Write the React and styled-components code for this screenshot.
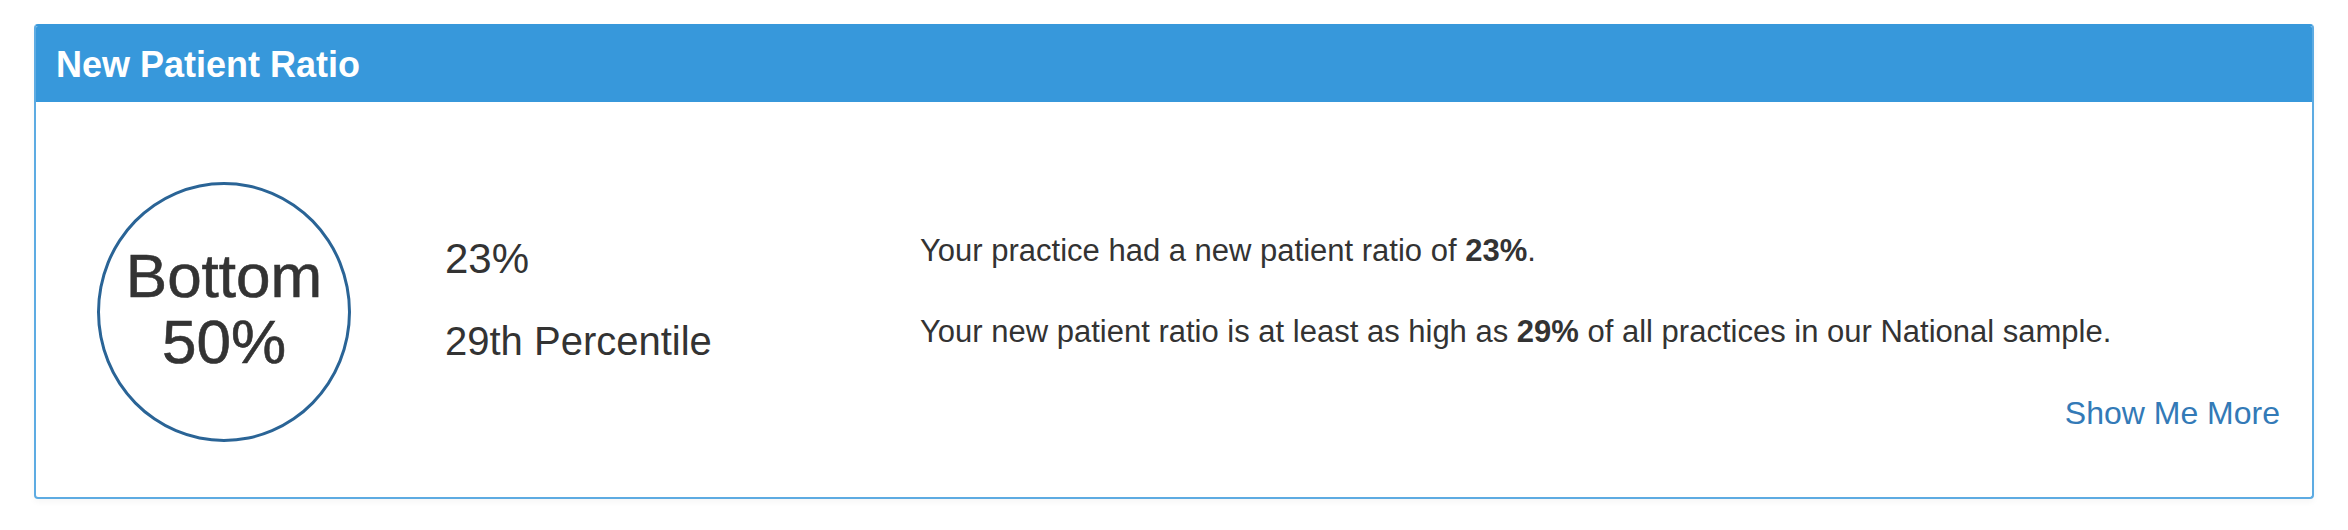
import React from 'react';
import styled, { createGlobalStyle } from 'styled-components';

const GlobalStyle = createGlobalStyle`
  html, body {
    margin: 0;
    padding: 0;
    background: #ffffff;
  }
  body {
    font-family: "Liberation Sans", Arial, Helvetica, sans-serif;
    color: #333333;
  }
`;

const Page = styled.div`
  padding: 24px 34px 31px 34px;
`;

const Panel = styled.section`
  border: 2px solid #5dabe2;
  border-top-color: #3798db;
  border-radius: 4px;
  background: #ffffff;
  box-shadow: 0 3px 6px rgba(0, 0, 0, 0.04);
  overflow: hidden;
`;

const PanelHeading = styled.header`
  background: #3798db;
  height: 76px;
  display: flex;
  align-items: center;
  padding: 0 20px;
`;

const PanelTitle = styled.h3`
  margin: 0;
  font-size: 36px;
  font-weight: 700;
  color: #ffffff;
  padding-top: 2px;
`;

const PanelBody = styled.div`
  display: flex;
  align-items: flex-start;
  padding: 80px 32px 55px 61px;
`;

const Ring = styled.div`
  flex: none;
  width: 248px;
  height: 248px;
  border: 3px solid #2a6496;
  border-radius: 50%;
  display: flex;
  flex-direction: column;
  align-items: center;
  justify-content: center;
  text-align: center;
  font-size: 62px;
  line-height: 66px;
  color: #333333;
  padding-bottom: 6px;
  -webkit-text-stroke: 0.6px #333333;
`;

const Stats = styled.div`
  flex: none;
  width: 475px;
  margin-left: 94px;
  margin-top: 53px;
`;

const StatLine = styled.div`
  font-size: ${(p) => p.size}px;
  line-height: 48px;
  margin-bottom: 34px;
`;

const Details = styled.div`
  flex: 1;
  display: flex;
  flex-direction: column;
  margin-top: 47px;
`;

const Sentence = styled.p`
  margin: 0 0 38px 0;
  font-size: 31px;
  line-height: 43px;
`;

const MoreLink = styled.a`
  align-self: flex-end;
  font-size: 32px;
  line-height: 43px;
  color: #337ab7;
  text-decoration: none;
  margin-top: 1px;
  cursor: pointer;
`;

export default function App() {
  return (
    <>
      <GlobalStyle />
      <Page>
        <Panel>
          <PanelHeading>
            <PanelTitle>New Patient Ratio</PanelTitle>
          </PanelHeading>
          <PanelBody>
            <Ring>
              <div>Bottom</div>
              <div>50%</div>
            </Ring>
            <Stats>
              <StatLine size={42}>23%</StatLine>
              <StatLine size={40}>29th Percentile</StatLine>
            </Stats>
            <Details>
              <Sentence>
                Your practice had a new patient ratio of <b>23%</b>.
              </Sentence>
              <Sentence>
                Your new patient ratio is at least as high as <b>29%</b> of all practices in our National sample.
              </Sentence>
              <MoreLink>Show Me More</MoreLink>
            </Details>
          </PanelBody>
        </Panel>
      </Page>
    </>
  );
}
